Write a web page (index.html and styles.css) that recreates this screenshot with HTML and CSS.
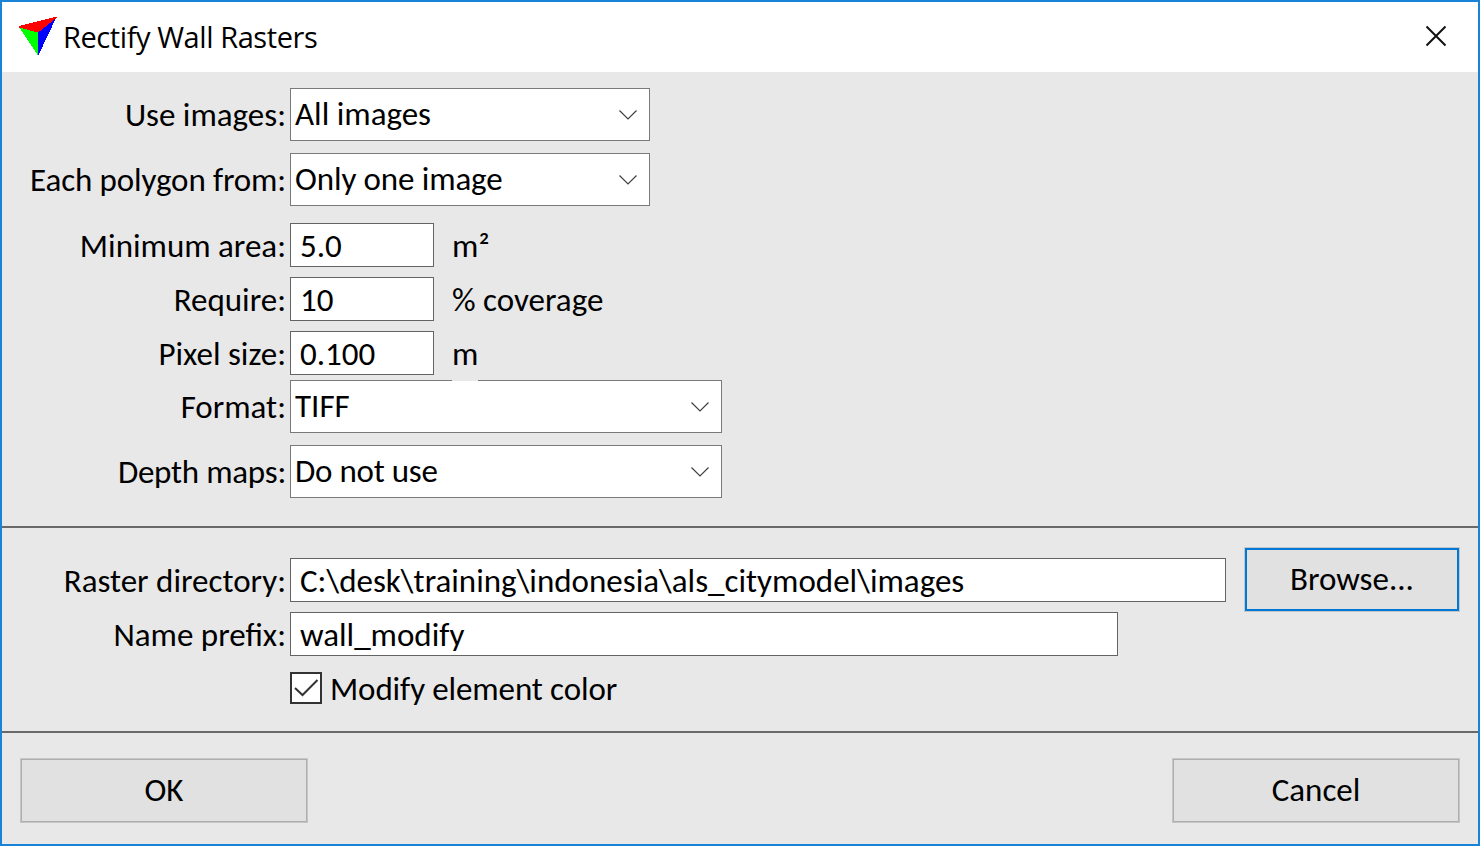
FILE: index.html
```html
<!DOCTYPE html>
<html lang="en">
<head>
<meta charset="utf-8">
<title>Rectify Wall Rasters</title>
<link rel="stylesheet" href="styles.css">
</head>
<body>
<div class="dialog">
  <header class="titlebar">
    <svg class="logo" width="40" height="40" viewBox="0 0 40 40" shape-rendering="crispEdges">
      <path fill="#00ff00" d="M1 11L20 16V39H19.500Z"/>
      <path fill="#0000ff" d="M38.500 1L20 15V39H20.500Z"/>
      <path fill="#ff0000" d="M1 10L39.500 .5L37 3L20 16.500L1 11.500Z"/>
    </svg>
    <h1 class="title">Rectify Wall Rasters</h1>
    <svg class="close" width="22" height="22" viewBox="0 0 22 22">
      <path d="M1.500 1.500L20.500 20.500M20.500 1.500L1.500 20.500"/>
    </svg>
  </header>

  <section class="settings">
    <div class="row tall">
      <span class="label">Use images:</span>
      <div class="select narrow"><span>All images</span><svg class="chevron" width="20" height="12" viewBox="0 0 20 12"><path d="M1.500 1.500L10 10L18.500 1.500"/></svg></div>
    </div>
    <div class="row tall">
      <span class="label tight">Each polygon from:</span>
      <div class="select narrow"><span class="tight">Only one image</span><svg class="chevron" width="20" height="12" viewBox="0 0 20 12"><path d="M1.500 1.500L10 10L18.500 1.500"/></svg></div>
    </div>
    <div class="row first-input">
      <span class="label">Minimum area:</span>
      <div class="input short">5.0</div><span class="unit">m<span class="exponent">²</span></span>
    </div>
    <div class="row">
      <span class="label">Require:</span>
      <div class="input short">10</div><span class="unit">% coverage</span>
    </div>
    <div class="row">
      <span class="label">Pixel size:</span>
      <div class="input short">0.100</div><span class="unit">m</span>
    </div>
    <div class="row tall format">
      <span class="label">Format:</span>
      <div class="select wide notched"><span>TIFF</span><svg class="chevron" width="20" height="12" viewBox="0 0 20 12"><path d="M1.500 1.500L10 10L18.500 1.500"/></svg></div>
    </div>
    <div class="row tall">
      <span class="label tighter">Depth maps:</span>
      <div class="select wide"><span class="tighter">Do not use</span><svg class="chevron" width="20" height="12" viewBox="0 0 20 12"><path d="M1.500 1.500L10 10L18.500 1.500"/></svg></div>
    </div>
  </section>

  <section class="output">
    <div class="row directory">
      <span class="label">Raster directory:</span>
      <div class="input path">C:\desk\training\indonesia\als_citymodel\images</div>
      <button class="button browse">Browse...</button>
    </div>
    <div class="row">
      <span class="label">Name prefix:</span>
      <div class="input prefix">wall_modify</div>
    </div>
    <div class="row check-row">
      <svg class="checkbox" width="32" height="32" viewBox="0 0 32 32">
        <rect x="1" y="1" width="30" height="30"/>
        <path d="M5 16L12.500 23L27.500 8"/>
      </svg>
      <span class="check-label tight">Modify element color</span>
    </div>
  </section>

  <footer class="actions">
    <button class="button action">OK</button>
    <button class="button action">Cancel</button>
  </footer>
</div>
</body>
</html>
```

FILE: styles.css
```css
* { box-sizing: border-box; }

body {
  margin: 0;
  font: 33px/44px Carlito, Calibri, sans-serif;
  color: #000;
}

.dialog {
  display: flex;
  flex-direction: column;
  width: 1480px;
  height: 846px;
  border: 2px solid #1883d7;
  background: #e8e8e8;
}

.titlebar {
  display: flex;
  align-items: center;
  height: 70px;
  padding: 0 31px 2px 16px;
  background: #fff;
}

.logo { margin-right: 5px; }

.title {
  flex: 1;
  margin: 0;
  padding-top: 2px;
  font: 29px/40px "Open Sans", sans-serif;
  letter-spacing: -0.42px;
}

.close { fill: none; stroke: #111; stroke-width: 2; }

.settings {
  display: flex;
  flex-direction: column;
  height: 456px;
  padding-top: 16px;
  border-bottom: 2px solid #696969;
}

.row {
  display: flex;
  align-items: center;
  height: 44px;
  margin-bottom: 10px;
  white-space: nowrap;
}

.row.tall { height: 53px; margin-bottom: 12px; }
.row.first-input { margin-top: 5px; }
.row.format { margin-top: -5px; }

.label {
  flex: none;
  width: 284px;
  margin-right: 4px;
  padding-top: 2px;
  text-align: right;
}

.tall .label { padding-top: 0; }

.tight { letter-spacing: -0.12px; }
.tighter { letter-spacing: -0.25px; }

.select {
  display: flex;
  flex: none;
  align-items: center;
  justify-content: space-between;
  height: 53px;
  padding: 0 11px 0 4px;
  border: 1px solid #7a7a7a;
  background: #fff;
}

.select span { padding-bottom: 2px; }

.narrow { width: 360px; }
.wide { width: 432px; }

/* Break in the top border under the unit label above */
.notched { position: relative; }
.notched::before {
  content: "";
  position: absolute;
  top: -1px;
  left: 161px;
  width: 26px;
  height: 1px;
  background: #e8e8e8;
}

.chevron { fill: none; stroke: #404040; stroke-width: 1.2; }

.input {
  flex: none;
  height: 44px;
  padding-left: 9px;
  line-height: 44px;
  border: 1px solid #646464;
  background: #fff;
}

.short { width: 144px; }
.path { width: 936px; }
.prefix { width: 828px; }

.unit { padding: 2px 0 0 18px; }

.exponent {
  line-height: 1;
  vertical-align: -2px;
}

.output {
  height: 205px;
  padding-top: 19px;
  border-bottom: 2px solid #696969;
}

.row.directory { height: 65px; margin-bottom: 0; }

.button {
  padding: 0 0 2px;
  height: 65px;
  font: inherit;
  color: #000;
  text-align: center;
  border: 1px solid #c6c6c6;
  box-shadow: inset 0 0 0 1px #adadad;
  background: #e1e1e1;
}

.browse {
  width: 216px;
  margin-left: 18px;
  box-shadow: inset 0 0 0 2px #0078d7;
}

.check-row { padding-left: 288px; }
.checkbox { fill: #fff; stroke: #333; stroke-width: 2; }
.checkbox path { fill: none; }
.check-label { padding: 2px 0 0 8px; }

.actions {
  display: flex;
  justify-content: space-between;
  padding: 25px 18px 0;
}

.action { width: 288px; }
```
